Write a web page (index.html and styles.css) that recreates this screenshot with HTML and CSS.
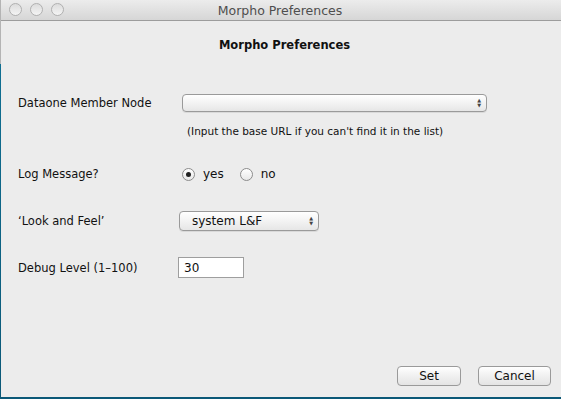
FILE: index.html
```html
<!DOCTYPE html>
<html lang="en">
<head>
  <meta charset="UTF-8" />
  <title>Morpho Preferences</title>
  <link rel="stylesheet" href="styles.css">
</head>
<body>
  <div class="desktop">
    <div class="window">
      <div class="titlebar">
        <div class="lights">
          <span class="light"></span>
          <span class="light"></span>
          <span class="light"></span>
        </div>
        <div class="title">Morpho Preferences</div>
      </div>

      <div class="content">
        <h1>Morpho Preferences</h1>

        <div class="row row-node">
          <label class="label">Dataone Member Node</label>
          <div class="combo combo-wide"><span class="arrows">&#9650;<br>&#9660;</span></div>
        </div>
        <div class="hint">(Input the base URL if you can't find it in the list)</div>

        <div class="row row-log">
          <label class="label">Log Message?</label>
          <div class="radios">
            <span class="radio checked"></span><span class="radio-text">yes</span>
            <span class="radio"></span><span class="radio-text">no</span>
          </div>
        </div>

        <div class="row row-look">
          <label class="label">‘Look and Feel’</label>
          <div class="combo combo-small"><span class="combo-text">system L&amp;F</span><span class="arrows">&#9650;<br>&#9660;</span></div>
        </div>

        <div class="row row-debug">
          <label class="label">Debug Level (1–100)</label>
          <div class="field">30</div>
        </div>

        <div class="buttons">
          <button class="btn btn-set">Set</button>
          <button class="btn btn-cancel">Cancel</button>
        </div>
      </div>
    </div>
  </div>
</body>
</html>
```

FILE: styles.css
```css
html, body {
  margin: 0;
  padding: 0;
}

body {
  width: 561px;
  height: 399px;
  overflow: hidden;
  font-family: 'DejaVu Sans', sans-serif;
  color: #111;
}

.desktop {
  height: 399px;
  background: linear-gradient(to bottom, #b4b4b4 0, #b4b4b4 64px, #0f6f92 64px, #0b5877 100%);
  padding: 0 0 2px 1px;
  box-sizing: border-box;
}

.window {
  height: 397px;
  background: #ececec;
  display: flex;
  flex-direction: column;
}

.titlebar {
  height: 21px;
  box-sizing: border-box;
  background: linear-gradient(to bottom, #ececec, #d6d6d6);
  border-bottom: 1px solid #9c9c9c;
  position: relative;
  display: flex;
  align-items: center;
  justify-content: center;
}

.lights {
  position: absolute;
  left: 8px;
  top: 3px;
  display: flex;
  gap: 8px;
}

.light {
  width: 11px;
  height: 11px;
  border-radius: 50%;
  border: 1px solid #b0b0b0;
  background: linear-gradient(to bottom, #dcdcdc, #f4f4f4);
}

.title {
  font-size: 12.5px;
  color: #4e4e4e;
  margin-left: -2px;
}

.content {
  flex: 1;
  padding: 0 10px 0 17px;
  display: flex;
  flex-direction: column;
}

h1 {
  font-size: 11.5px;
  font-weight: bold;
  text-align: center;
  margin: 17px 0 0 0;
  padding-left: 0;
  line-height: 14px;
}

.row {
  display: flex;
  align-items: center;
}

.label {
  width: 160px;
  font-size: 11.5px;
}

.row-node {
  margin-top: 41px;
  height: 19px;
}

.combo {
  height: 18px;
  box-sizing: border-box;
  border: 1px solid #9a9a9a;
  border-radius: 4px;
  background: linear-gradient(to bottom, #ffffff, #f3f3f3 50%, #e6e6e6);
  display: flex;
  align-items: center;
  justify-content: space-between;
  box-shadow: 0 1px 0 rgba(0,0,0,0.08);
}

.combo-wide {
  width: 305px;
  margin-left: 4px;
  justify-content: flex-end;
}

.combo-small {
  width: 140px;
  height: 20px;
  margin-left: 1px;
}

.combo-text {
  font-size: 12px;
  margin-left: 12px;
}

.arrows {
  font-size: 5px;
  line-height: 5px;
  color: #444;
  margin-right: 5px;
  text-align: center;
}

.hint {
  font-size: 10.5px;
  margin: 13px 0 0 169px;
}

.row-log {
  margin-top: 30px;
}

.radios {
  display: flex;
  align-items: center;
  margin-left: 4px;
}

.radio {
  width: 11px;
  height: 11px;
  border-radius: 50%;
  border: 1px solid #8c8c8c;
  background: linear-gradient(to bottom, #ffffff, #e8e8e8);
  display: flex;
  align-items: center;
  justify-content: center;
}

.radio.checked::after {
  content: "";
  width: 5px;
  height: 5px;
  border-radius: 50%;
  background: #222;
}

.radio-text {
  font-size: 12px;
  margin: 0 16px 0 8px;
}

.row-look {
  margin-top: 30px;
}

.row-debug {
  margin-top: 26px;
}

.field {
  width: 66px;
  height: 21px;
  box-sizing: border-box;
  border: 1px solid #9e9e9e;
  background: #fff;
  font-size: 12px;
  padding: 3px 0 0 5px;
}

.buttons {
  margin-top: auto;
  margin-bottom: 11px;
  display: flex;
  justify-content: flex-end;
  gap: 17px;
}

.btn {
  height: 20px;
  border: 1px solid #9a9a9a;
  border-radius: 4px;
  background: linear-gradient(to bottom, #ffffff, #f0f0f0 50%, #e4e4e4);
  font-family: 'DejaVu Sans', sans-serif;
  font-size: 12px;
  color: #111;
  padding: 0;
}

.btn-set {
  width: 64px;
}

.btn-cancel {
  width: 73px;
}
```
